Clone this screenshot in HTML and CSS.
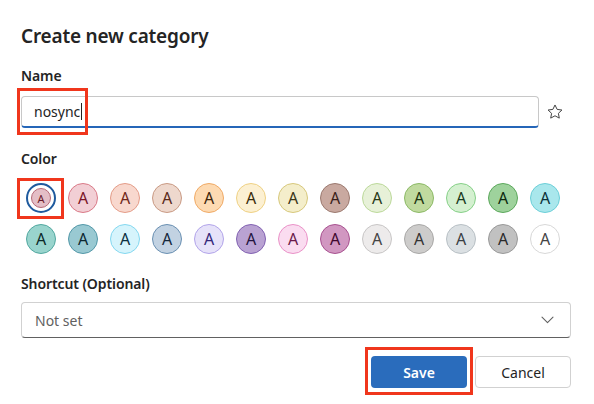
FILE: index.html
```html
<!DOCTYPE html>
<html lang="en">
<head>
    <meta charset="UTF-8" />
    <title>Create new category</title>
    <link rel="stylesheet" href="styles.css">
</head>
<body>
    <div class="dialog">
        <h1 class="titulo">Create new category</h1>

        <div class="rotulo">Name</div>
        <div class="linha-nome">
            <div class="campo">
                <span class="texto">nosync</span><span class="cursor"></span>
                <div class="marca marca-nome"></div>
            </div>
            <button class="estrela" title="Favorite">
                <svg width="18" height="18" viewBox="0 0 20 20"><path d="M10 2.2l2.35 4.9 5.35.7-3.92 3.7.98 5.3L10 14.2l-4.76 2.6.98-5.3L2.3 7.8l5.35-.7z" fill="none" stroke="#424242" stroke-width="1.1" stroke-linejoin="round"/></svg>
            </button>
        </div>

        <div class="rotulo">Color</div>
        <div class="cores">
            <div class="cor selecionada">
                <span class="miolo c1">A</span>
                <div class="marca marca-cor"></div>
            </div>
            <span class="cor c2">A</span>
            <span class="cor c3">A</span>
            <span class="cor c4">A</span>
            <span class="cor c5">A</span>
            <span class="cor c6">A</span>
            <span class="cor c7">A</span>
            <span class="cor c8">A</span>
            <span class="cor c9">A</span>
            <span class="cor c10">A</span>
            <span class="cor c11">A</span>
            <span class="cor c12">A</span>
            <span class="cor c13">A</span>
            <span class="cor c14">A</span>
            <span class="cor c15">A</span>
            <span class="cor c16">A</span>
            <span class="cor c17">A</span>
            <span class="cor c18">A</span>
            <span class="cor c19">A</span>
            <span class="cor c20">A</span>
            <span class="cor c21">A</span>
            <span class="cor c22">A</span>
            <span class="cor c23">A</span>
            <span class="cor c24">A</span>
            <span class="cor c25">A</span>
            <span class="cor c26">A</span>
        </div>

        <div class="rotulo">Shortcut (Optional)</div>
        <div class="seletor">
            <span>Not set</span>
            <svg width="13" height="8" viewBox="0 0 13 8"><path d="M1 1.2l5.5 5.5L12 1.2" fill="none" stroke="#616161" stroke-width="1.1" stroke-linecap="round" stroke-linejoin="round"/></svg>
        </div>

        <div class="acoes">
            <div class="destaque">
                <button class="botao salvar">Save</button>
                <div class="marca marca-salvar"></div>
            </div>
            <button class="botao cancelar">Cancel</button>
        </div>
    </div>
</body>
</html>
```

FILE: styles.css
```css
body {
    margin: 0;
    background: #fff;
    font-family: "Noto Sans", "Open Sans", sans-serif;
    color: #242424;
}
.dialog {
    width: 550px;
    padding: 22px 0 14px 21px;
}
.titulo {
    margin: 0 0 16px 0;
    font-size: 19px;
    font-weight: 600;
    line-height: 28px;
    letter-spacing: -0.2px;
}
.rotulo {
    font-size: 14px;
    font-weight: 600;
    line-height: 20px;
    margin-bottom: 6px;
    letter-spacing: -0.1px;
}
.linha-nome {
    display: flex;
    align-items: center;
    margin-top: 10px;
    margin-bottom: 21px;
}
.campo {
    position: relative;
    box-sizing: border-box;
    width: 518px;
    height: 32px;
    border: 1px solid #c8c8c8;
    border-bottom: 2px solid #2566b8;
    border-radius: 4px;
    padding: 0 12px;
    display: flex;
    align-items: center;
    font-size: 14px;
}
.cursor {
    display: inline-block;
    width: 1px;
    height: 17px;
    background: #222;
    margin-left: 1px;
}
.estrela {
    background: none;
    border: none;
    padding: 0;
    margin-left: 7px;
    width: 18px;
    height: 18px;
}
.marca {
    position: absolute;
    border: 3px solid #f0361c;
    box-sizing: border-box;
    pointer-events: none;
}
.marca-nome {
    left: -5px;
    top: -9px;
    width: 71px;
    height: 47px;
}
.cores {
    display: grid;
    grid-template-columns: repeat(13, 30px);
    column-gap: 12px;
    row-gap: 11px;
    padding-left: 5px;
    margin-top: 14px;
    margin-bottom: 20px;
}
.cor {
    position: relative;
    box-sizing: border-box;
    width: 30px;
    height: 30px;
    border-radius: 50%;
    border: 1px solid #ccc;
    display: flex;
    align-items: center;
    justify-content: center;
    font-size: 16px;
    font-weight: 400;
    line-height: 1;
}
.selecionada {
    border: 2px solid #1f5a9e;
}
.miolo {
    box-sizing: border-box;
    width: 20px;
    height: 20px;
    border-radius: 50%;
    border: 1px solid #b66a78;
    display: flex;
    align-items: center;
    justify-content: center;
    font-size: 11px;
}
.marca-cor {
    left: -11px;
    top: -7px;
    width: 47px;
    height: 41px;
}
.c1 { background: #e4bec6; color: #6a1a2a; }
.c2 { background: #f2cfd5; border-color: #da7a88; color: #7a1426; }
.c3 { background: #f8d8ce; border-color: #e49c88; color: #70281a; }
.c4 { background: #eed8cd; border-color: #c99a84; color: #5a2a1a; }
.c5 { background: #fddab2; border-color: #f0aa66; color: #40260a; }
.c6 { background: #fcf0d2; border-color: #efd184; color: #3a2c0a; }
.c7 { background: #f4eecb; border-color: #d7c87c; color: #3a3618; }
.c8 { background: #c9a9a0; border-color: #9c7a70; color: #3a1e1a; }
.c9 { background: #e7f1d8; border-color: #bcd99a; color: #283a18; }
.c10 { background: #c0da9f; border-color: #8cba66; color: #1c3410; }
.c11 { background: #d4f0d0; border-color: #86d088; color: #183a1c; }
.c12 { background: #9ed29c; border-color: #5ca85c; color: #0c2a0e; }
.c13 { background: #a9e7ec; border-color: #6ccfd8; color: #0c3238; }
.c14 { background: #99d4cd; border-color: #52a8a0; color: #0c2a28; }
.c15 { background: #99c9d2; border-color: #5398a8; color: #0c2830; }
.c16 { background: #d6f4fc; border-color: #84d8f0; color: #0c3040; }
.c17 { background: #c2d2e2; border-color: #6a90b2; color: #14283c; }
.c18 { background: #e6e2f9; border-color: #b2a4ea; color: #34287a; }
.c19 { background: #b9a2d2; border-color: #8262b2; color: #24143e; }
.c20 { background: #fadcf0; border-color: #ea92c8; color: #6a1a4a; }
.c21 { background: #d197c1; border-color: #a85290; color: #40082e; }
.c22 { background: #edebeb; border-color: #c8c6c6; color: #444; }
.c23 { background: #cdcccb; border-color: #a9a8a7; color: #333; }
.c24 { background: #dbe0e3; border-color: #b8c0c5; color: #3a3f44; }
.c25 { background: #c1c1c1; border-color: #999; color: #2a2a2a; }
.c26 { background: #fff; border-color: #d8d8d8; color: #444; }
.seletor {
    box-sizing: border-box;
    width: 550px;
    height: 36px;
    margin-top: 8px;
    border: 1px solid #d1d1d1;
    border-bottom-color: #616161;
    border-radius: 4px;
    padding: 0 16px 0 13px;
    display: flex;
    align-items: center;
    justify-content: space-between;
    font-size: 14px;
    color: #616161;
}
.acoes {
    display: flex;
    justify-content: flex-end;
    gap: 8px;
    margin-top: 18px;
}
.destaque {
    position: relative;
    display: flex;
}
.botao {
    box-sizing: border-box;
    width: 96px;
    height: 32px;
    border-radius: 4px;
    font-family: "Noto Sans", "Open Sans", sans-serif;
    font-size: 14px;
    cursor: pointer;
}
.salvar {
    background: #2a6cbc;
    border: none;
    color: #fff;
    font-weight: 600;
}
.cancelar {
    background: #fff;
    border: 1px solid #d1d1d1;
    color: #242424;
}
.marca-salvar {
    left: -6px;
    top: -9px;
    width: 108px;
    height: 48px;
}
```
